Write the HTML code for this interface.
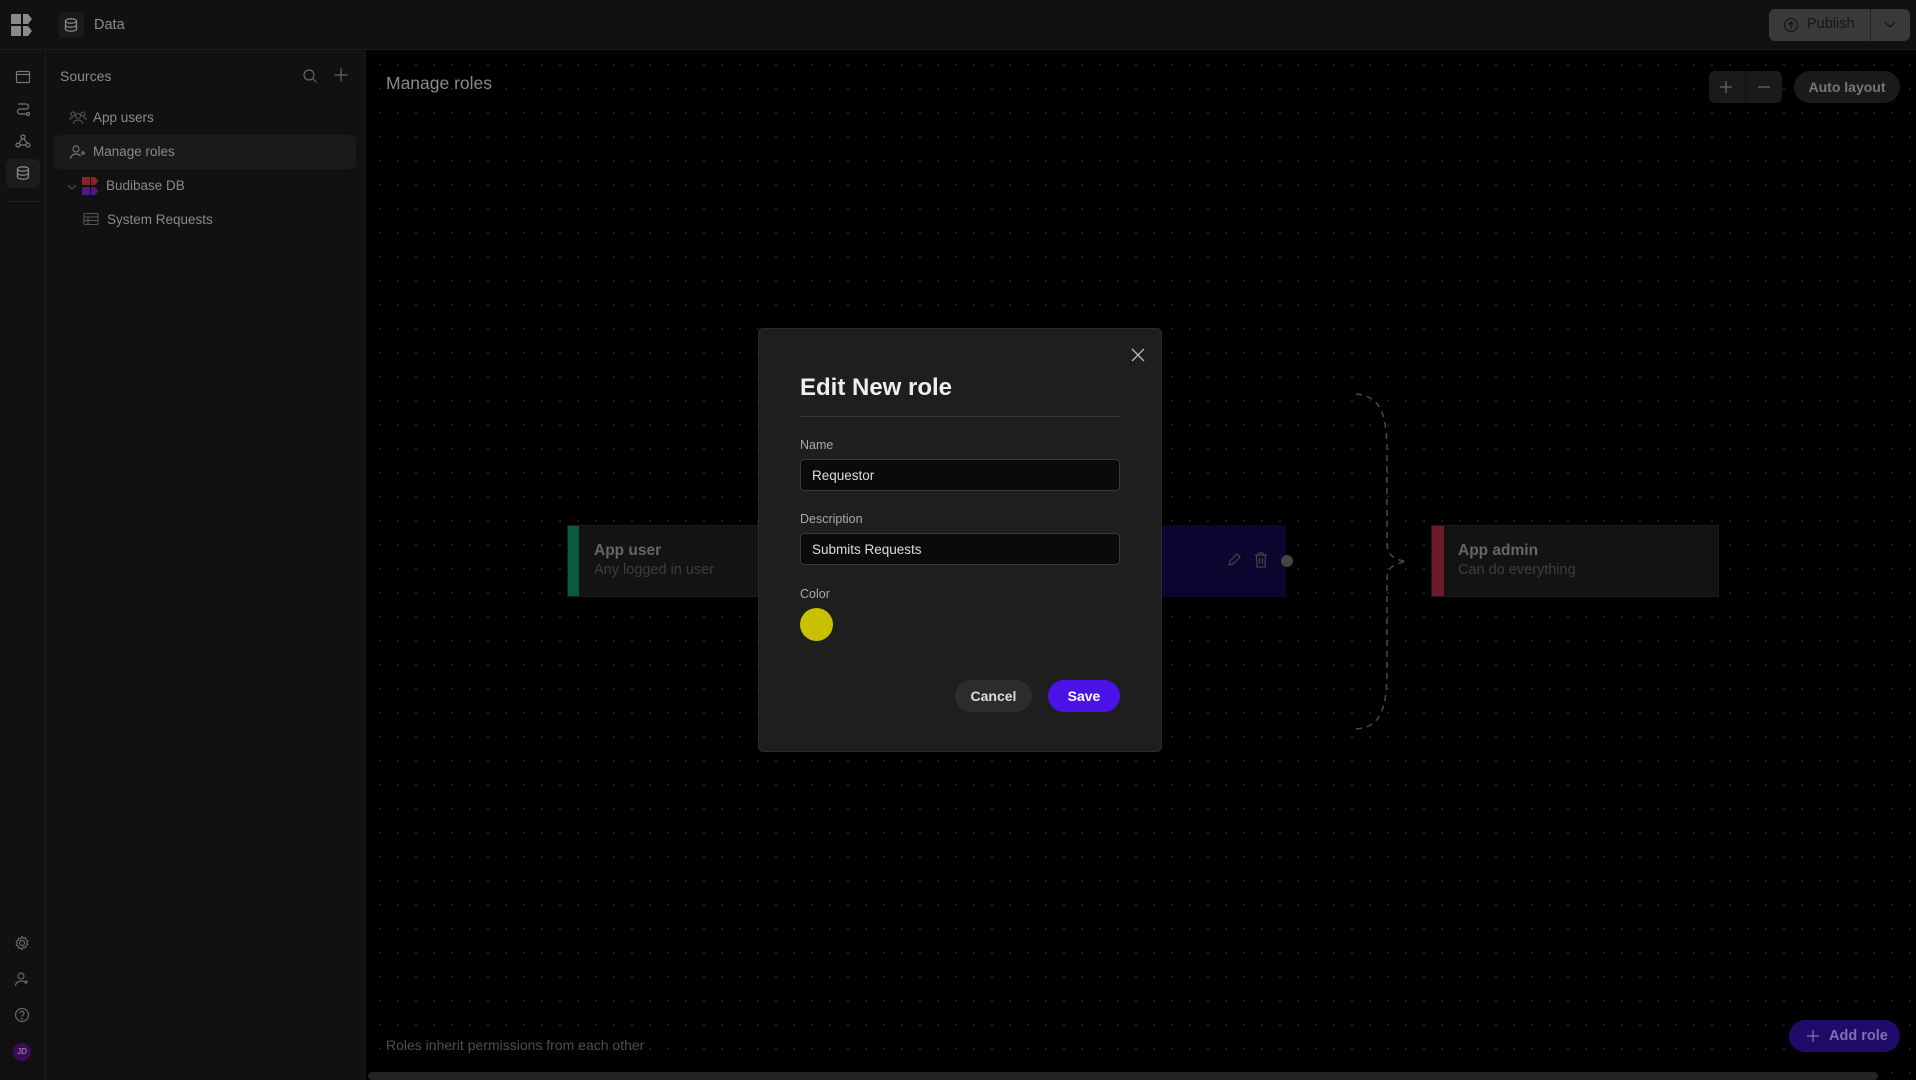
<!DOCTYPE html>
<html><head><meta charset="utf-8"><style>
*{margin:0;padding:0;box-sizing:border-box}
body{width:1916px;height:1080px;background:#000;font-family:"Liberation Sans",sans-serif;position:relative;overflow:hidden;color:#888}
.abs{position:absolute}
.top{left:0;top:0;width:1916px;height:50px;background:#111;border-bottom:1px solid #1c1c1c}
.rail{left:0;top:50px;width:46px;height:1030px;background:#111;border-right:1px solid #1c1c1c}
.side{left:46px;top:50px;width:320px;height:1030px;background:#111;border-right:1px solid #1c1c1c}
.canvas{left:366px;top:51px;width:1550px;height:1029px;background-color:#000;background-image:radial-gradient(circle,#222 0.8px,transparent 1.1px);background-size:18px 24px;background-position:5px 2px}
svg{display:block}
.item{position:absolute;font-size:13.5px;color:#8a8a8a}
.card{position:absolute;background:#131313;border:1px solid #1c1c1c}
.card b{position:absolute;left:26px;top:16px;font-size:15.5px;color:#666;font-weight:bold}
.card span{position:absolute;left:26px;top:36px;font-size:14.5px;color:#3e3e3e}
.modal{left:758px;top:328px;width:404px;height:424px;background:#1e1e1e;border:1px solid #2c2c2c;border-radius:5px}
.lbl{position:absolute;left:41px;font-size:12.5px;color:#aaa}
.inp{position:absolute;left:41px;width:320px;height:32px;background:#0a0a0a;border:1px solid #3a3a3a;border-radius:4px;font-size:13.5px;color:#ddd;padding:8px 11px}
</style></head><body>
<div class="abs top"></div>
<div class="abs rail"></div>
<div class="abs side"></div>
<div class="abs canvas"></div>

<svg class="abs" style="left:11px;top:14px" width="22" height="22" viewBox="0 0 22 22"><g fill="#8a8a8a"><rect x="0" y="0" width="10" height="10" rx="1"/><path d="M12 0h5l4 5-4 5h-5z"/><rect x="0" y="12" width="10" height="10" rx="1"/><path d="M12 12h5l4 5-4 5h-5z"/></g></svg>
<div class="abs" style="left:58px;top:12px;width:26px;height:26px;background:#1a1a1a;border-radius:5px"></div>
<svg class="abs" style="left:63px;top:17px" width="16" height="16" viewBox="0 0 16 16" fill="none" stroke="#888" stroke-width="1.3"><ellipse cx="8" cy="4" rx="5.5" ry="2.2"/><path d="M2.5 4v8c0 1.2 2.5 2.2 5.5 2.2s5.5-1 5.5-2.2V4M2.5 8c0 1.2 2.5 2.2 5.5 2.2s5.5-1 5.5-2.2"/></svg>
<div class="abs" style="left:94px;top:17px;font-size:14.5px;color:#8a8a8a">Data</div>

<div class="abs" style="left:1769px;top:9px;width:141px;height:32px;background:#3a3a3a;border-radius:6px"></div>
<div class="abs" style="left:1870px;top:9px;width:1px;height:32px;background:#222"></div>
<svg class="abs" style="left:1783px;top:17px" width="16" height="16" viewBox="0 0 16 16" fill="none" stroke="#151515" stroke-width="1.3"><circle cx="8" cy="8" r="6.5"/><path d="M8 11.5V5M5.5 7.5L8 5l2.5 2.5"/></svg>
<div class="abs" style="left:1807px;top:16px;font-size:14.5px;color:#151515">Publish</div>
<svg class="abs" style="left:1883px;top:19px" width="14" height="12" viewBox="0 0 14 12" fill="none" stroke="#151515" stroke-width="1.3"><path d="M2 3l5 5 5-5"/></svg>

<svg class="abs" style="left:15px;top:69px" width="16" height="16" viewBox="0 0 16 16" fill="none" stroke="#777" stroke-width="1.2"><rect x="1.5" y="2.5" width="13" height="11" rx="1"/><path d="M1.5 5.5h13"/></svg>
<svg class="abs" style="left:15px;top:101px" width="16" height="16" viewBox="0 0 16 16" fill="none" stroke="#777" stroke-width="1.2"><path d="M3 3h8a2.5 2.5 0 010 5H5a2.5 2.5 0 000 5h6"/><circle cx="13" cy="13" r="1.5"/></svg>
<svg class="abs" style="left:15px;top:133px" width="16" height="16" viewBox="0 0 16 16" fill="none" stroke="#777" stroke-width="1.2"><circle cx="8" cy="4" r="2"/><circle cx="3" cy="12" r="2"/><circle cx="13" cy="12" r="2"/><path d="M7 6L4 10M9 6l3 4M5 12h6"/></svg>
<div class="abs" style="left:6px;top:159px;width:34px;height:29px;background:#1c1c1c;border-radius:6px"></div>
<svg class="abs" style="left:15px;top:165px" width="16" height="16" viewBox="0 0 16 16" fill="none" stroke="#888" stroke-width="1.3"><ellipse cx="8" cy="4" rx="5.5" ry="2.2"/><path d="M2.5 4v8c0 1.2 2.5 2.2 5.5 2.2s5.5-1 5.5-2.2V4M2.5 8c0 1.2 2.5 2.2 5.5 2.2s5.5-1 5.5-2.2"/></svg>
<div class="abs" style="left:6px;top:201px;width:34px;height:1px;background:#222"></div>

<svg class="abs" style="left:14px;top:935px" width="16" height="16" viewBox="0 0 16 16" fill="none" stroke="#666" stroke-width="1.2"><circle cx="8" cy="8" r="2.5"/><path d="M8 1.5l1.3 1.7 2.1-.5.5 2.1 1.9 1-1 1.9 1 1.9-1.9 1-.5 2.1-2.1-.5L8 14.5l-1.3-1.7-2.1.5-.5-2.1-1.9-1 1-1.9-1-1.9 1.9-1 .5-2.1 2.1.5z"/></svg>
<svg class="abs" style="left:14px;top:971px" width="16" height="16" viewBox="0 0 16 16" fill="none" stroke="#666" stroke-width="1.2"><circle cx="7" cy="5" r="3"/><path d="M1.5 15c0-3 2.5-5 5.5-5s4 1 4.5 2M12 9v4M10 11h4"/></svg>
<svg class="abs" style="left:14px;top:1007px" width="16" height="16" viewBox="0 0 16 16" fill="none" stroke="#666" stroke-width="1.2"><circle cx="8" cy="8" r="6.5"/><path d="M6 6.2a2 2 0 114 .3c0 1.3-2 1.5-2 3"/><circle cx="8" cy="11.8" r=".4"/></svg>
<div class="abs" style="left:13px;top:1043px;width:18px;height:18px;border-radius:50%;background:#3b0a5a;color:#aaa;font-size:8px;text-align:center;line-height:18px">JD</div>

<div class="abs" style="left:60px;top:68px;font-size:14px;color:#8a8a8a">Sources</div>
<svg class="abs" style="left:302px;top:68px" width="16" height="16" viewBox="0 0 16 16" fill="none" stroke="#666" stroke-width="1.2"><circle cx="7" cy="7" r="5"/><path d="M11 11l3.5 3.5"/></svg>
<svg class="abs" style="left:333px;top:67px" width="16" height="16" viewBox="0 0 16 16" fill="none" stroke="#666" stroke-width="1.2"><path d="M8 1.5v13M1.5 8h13"/></svg>
<svg class="abs" style="left:69px;top:110px" width="18" height="16" viewBox="0 0 18 16" fill="none" stroke="#555" stroke-width="1.1"><circle cx="9" cy="6" r="2.5"/><path d="M4.5 14c0-2.5 2-4 4.5-4s4.5 1.5 4.5 4"/><circle cx="4" cy="4" r="2"/><circle cx="14" cy="4" r="2"/><path d="M1 10c0-1.5 1.2-3 3-3M17 10c0-1.5-1.2-3-3-3"/></svg>
<div class="item" style="left:93px;top:110px">App users</div>
<div class="abs" style="left:54px;top:135px;width:302px;height:34px;background:#1a1a1a;border-radius:6px"></div>
<svg class="abs" style="left:69px;top:144px" width="18" height="16" viewBox="0 0 18 16" fill="none" stroke="#777" stroke-width="1.2"><circle cx="7" cy="5" r="3"/><path d="M1.5 15c0-3 2.5-5 5.5-5s4 1 4.5 2"/><circle cx="14" cy="9" r="1.2"/></svg>
<div class="item" style="left:93px;top:144px">Manage roles</div>
<svg class="abs" style="left:66px;top:182px" width="12" height="10" viewBox="0 0 12 10" fill="none" stroke="#555" stroke-width="1.1"><path d="M2 3l4 4 4-4"/></svg>
<svg class="abs" style="left:82px;top:177px" width="18" height="18" viewBox="0 0 18 18"><rect x="0" y="0" width="8" height="8" fill="#8a2232"/><path d="M9 0h4l3.5 4-3.5 4H9z" fill="#8a2232"/><rect x="0" y="10" width="8" height="8" fill="#4c1a85"/><path d="M9 10h4l3.5 4-3.5 4H9z" fill="#4c1a85"/></svg>
<div class="item" style="left:106px;top:178px">Budibase DB</div>
<svg class="abs" style="left:83px;top:212px" width="16" height="14" viewBox="0 0 16 14" fill="none" stroke="#555" stroke-width="1.1"><rect x="1" y="1.5" width="14" height="11" rx="1"/><path d="M1 5h14M1 8.5h14M5 5v7.5"/></svg>
<div class="item" style="left:107px;top:212px">System Requests</div>

<div class="abs" style="left:386px;top:73px;font-size:17.5px;color:#8a8a8a">Manage roles</div>
<div class="abs" style="left:1709px;top:71px;width:73px;height:32px;background:#1a1a1a;border-radius:6px"></div>
<div class="abs" style="left:1745px;top:71px;width:1px;height:32px;background:#111"></div>
<svg class="abs" style="left:1718px;top:79px" width="16" height="16" viewBox="0 0 16 16" stroke="#666" stroke-width="1.3"><path d="M8 2v12M2 8h12"/></svg>
<svg class="abs" style="left:1756px;top:79px" width="16" height="16" viewBox="0 0 16 16" stroke="#666" stroke-width="1.3"><path d="M2 8h12"/></svg>
<div class="abs" style="left:1794px;top:71px;width:106px;height:32px;background:#1a1a1a;border-radius:16px;font-size:14px;color:#777;text-align:center;line-height:32px;font-weight:bold">Auto layout</div>

<div class="card" style="left:567px;top:525px;width:200px;height:72px"><div style="position:absolute;left:0;top:0;width:11px;height:70px;background:#0a5a3e"></div><b>App user</b><span>Any logged in user</span></div>
<div class="abs" style="left:1120px;top:525px;width:166px;height:72px;background:#0c0530"></div>
<svg class="abs" style="left:1226px;top:552px" width="16" height="16" viewBox="0 0 16 16" fill="none" stroke="#444" stroke-width="1.2"><path d="M3 13l1-4 7-7 3 3-7 7z"/></svg>
<svg class="abs" style="left:1254px;top:552px" width="14" height="16" viewBox="0 0 14 16" fill="none" stroke="#444" stroke-width="1.2"><path d="M1 3h12M5 3V1h4v2M2.5 3l.5 12h8l.5-12M5.5 6v6M8.5 6v6"/></svg>
<div class="abs" style="left:1281px;top:555px;width:12px;height:12px;border-radius:50%;background:#444"></div>
<div class="card" style="left:1431px;top:525px;width:288px;height:72px"><div style="position:absolute;left:0;top:0;width:12px;height:70px;background:#6e1a28"></div><b>App admin</b><span>Can do everything</span></div>
<svg class="abs" style="left:1340px;top:385px" width="100" height="350" viewBox="0 0 100 350" fill="none" stroke="#4a4a4a" stroke-width="1.5" stroke-dasharray="6 5"><path d="M16 9c25 2 31 20 31 60v90c0 12 8 16 22 18"/><path d="M16 344c25-2 31-20 31-60v-90c0-12 8-16 22-18"/></svg>

<div class="abs" style="left:386px;top:1037px;font-size:14px;color:#4e4e4e">Roles inherit permissions from each other</div>
<div class="abs" style="left:1789px;top:1020px;width:111px;height:32px;background:#200a6a;border-radius:16px;font-size:14.5px;color:#8070b0;line-height:32px;font-weight:bold;padding-left:40px">Add role</div>
<svg class="abs" style="left:1805px;top:1028px" width="16" height="16" viewBox="0 0 16 16" stroke="#8070b0" stroke-width="1.3"><path d="M8 2v12M2 8h12"/></svg>
<div class="abs" style="left:368px;top:1072px;width:1510px;height:8px;background:#242424;border-radius:4px"></div>

<div class="abs modal">
<svg style="position:absolute;left:372px;top:19px" width="14" height="14" viewBox="0 0 14 14" stroke="#bbb" stroke-width="1.3"><path d="M1 1l12 12M13 1L1 13"/></svg>
<div style="position:absolute;left:41px;top:45px;font-size:24px;font-weight:bold;color:#eee">Edit New role</div>
<div style="position:absolute;left:41px;top:87px;width:320px;height:1px;background:#383838"></div>
<div class="lbl" style="top:109px">Name</div>
<div class="inp" style="top:130px">Requestor</div>
<div class="lbl" style="top:183px">Description</div>
<div class="inp" style="top:204px">Submits Requests</div>
<div class="lbl" style="top:258px">Color</div>
<div style="position:absolute;left:41px;top:279px;width:33px;height:33px;border-radius:50%;background:#c9c000"></div>
<div style="position:absolute;left:196px;top:351px;width:77px;height:32px;border-radius:16px;background:#2c2c2c;color:#ddd;font-size:14px;font-weight:bold;text-align:center;line-height:32px">Cancel</div>
<div style="position:absolute;left:289px;top:351px;width:72px;height:32px;border-radius:16px;background:#4a12e6;color:#fff;font-size:14px;font-weight:bold;text-align:center;line-height:32px">Save</div>
</div>
</body></html>
